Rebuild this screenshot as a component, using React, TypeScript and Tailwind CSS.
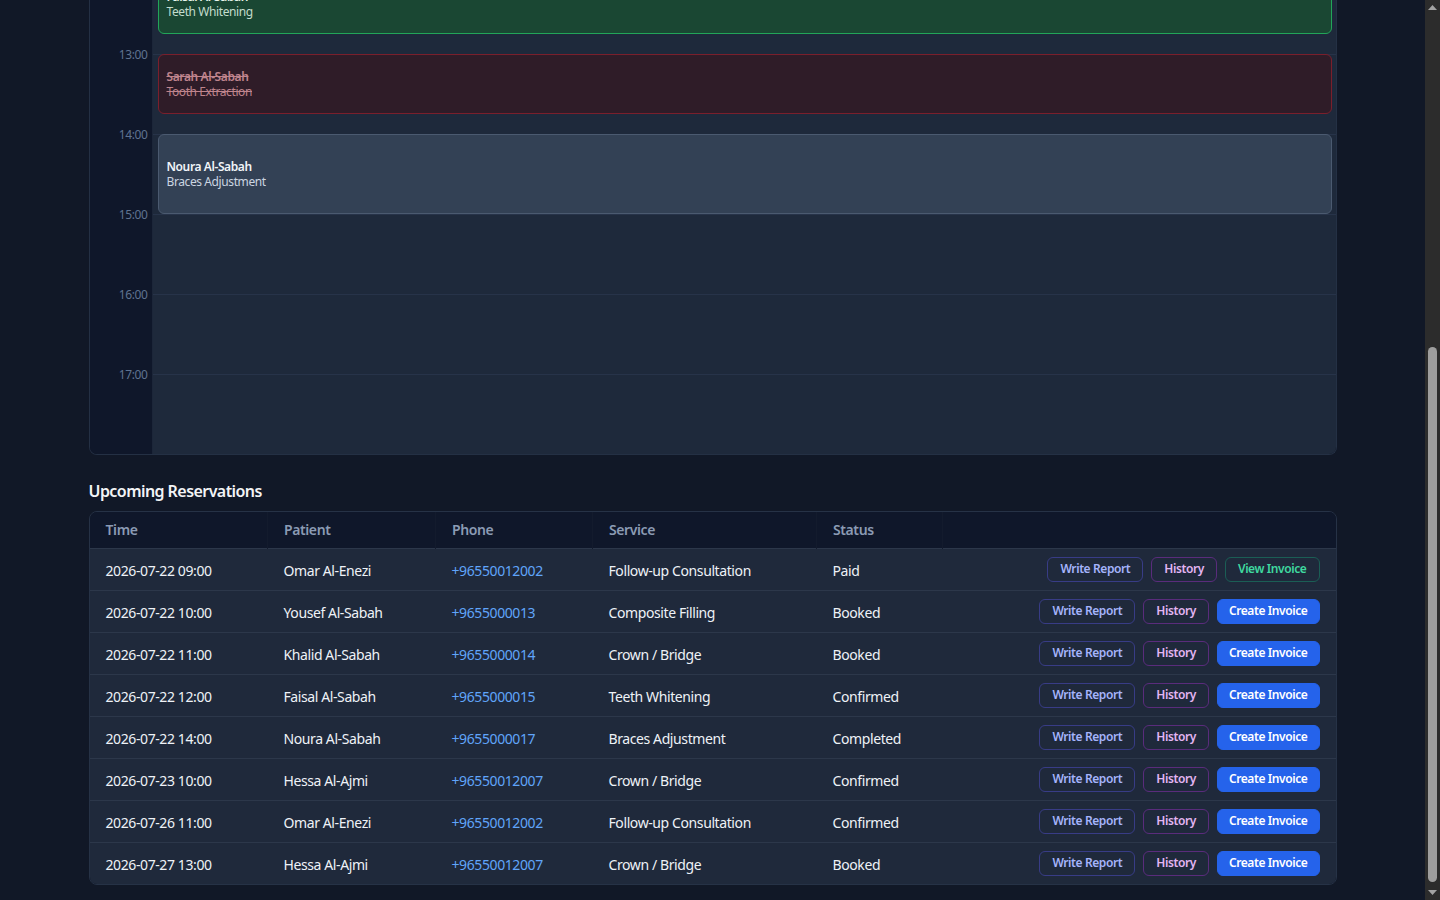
import React from "react";

interface Reservation {
  time: string;
  patient: string;
  phone: string;
  service: string;
  status: string;
  invoiced?: boolean;
}

const reservations: Reservation[] = [
  { time: "2026-07-22 09:00", patient: "Omar Al-Enezi", phone: "+96550012002", service: "Follow-up Consultation", status: "Paid", invoiced: true },
  { time: "2026-07-22 10:00", patient: "Yousef Al-Sabah", phone: "+9655000013", service: "Composite Filling", status: "Booked" },
  { time: "2026-07-22 11:00", patient: "Khalid Al-Sabah", phone: "+9655000014", service: "Crown / Bridge", status: "Booked" },
  { time: "2026-07-22 12:00", patient: "Faisal Al-Sabah", phone: "+9655000015", service: "Teeth Whitening", status: "Confirmed" },
  { time: "2026-07-22 14:00", patient: "Noura Al-Sabah", phone: "+9655000017", service: "Braces Adjustment", status: "Completed" },
  { time: "2026-07-23 10:00", patient: "Hessa Al-Ajmi", phone: "+96550012007", service: "Crown / Bridge", status: "Confirmed" },
  { time: "2026-07-26 11:00", patient: "Omar Al-Enezi", phone: "+96550012002", service: "Follow-up Consultation", status: "Confirmed" },
  { time: "2026-07-27 13:00", patient: "Hessa Al-Ajmi", phone: "+96550012007", service: "Crown / Bridge", status: "Booked" },
];

const hours = ["12:00", "13:00", "14:00", "15:00", "16:00", "17:00"];

// day view, only the afternoon is in view (page is scrolled)
function DayCalendar() {
  return (
    <div className="flex rounded-b-lg border border-t-0 border-[#243044] overflow-hidden">
      <div className="w-[63px] shrink-0 bg-[#0f172a] border-r border-[#1c2639]">
        {hours.map((h) => (
          <div key={h} className="h-20 pr-1 text-right text-xs leading-4 text-[#5f7391]">
            <span className="relative -top-[7px]">{h}</span>
          </div>
        ))}
      </div>
      <div className="relative flex-1 bg-[#1e293b]">
        {hours.map((h) => (
          <div key={h} className="h-20 border-t border-[#273349]" />
        ))}

        <div className="absolute left-[5px] right-1 top-0 h-[60px] rounded-md border border-[#22a559] bg-[#1a4733] px-2 flex flex-col justify-center text-xs leading-[15px]">
          <span className="font-semibold text-[#e8f5ec]">Faisal Al-Sabah</span>
          <span className="text-[#c3dccd]">Teeth Whitening</span>
        </div>

        <div className="absolute left-[5px] right-1 top-20 h-[60px] rounded-md border border-[#7a1f2c] bg-[#2f1c28] px-2 flex flex-col justify-center text-xs leading-[15px] line-through text-[#bf848d]">
          <span className="font-semibold">Sarah Al-Sabah</span>
          <span>Tooth Extraction</span>
        </div>

        <div className="absolute left-[5px] right-1 top-40 h-20 rounded-md border border-[#4b5a70] bg-[#334155] px-2 flex flex-col justify-center text-xs leading-[15px]">
          <span className="font-semibold text-[#f1f5f9]">Noura Al-Sabah</span>
          <span className="text-[#cbd5e1]">Braces Adjustment</span>
        </div>
      </div>
    </div>
  );
}

function RowActions({ invoiced }: { invoiced?: boolean }) {
  return (
    <div className="flex justify-end gap-2">
      <button className="h-[25px] px-3 rounded-md border border-[#383c86] text-xs font-semibold text-[#a5b4fc]">
        Write Report
      </button>
      <button className="h-[25px] px-3 rounded-md border border-[#5a2c7c] text-xs font-semibold text-[#e3b5f3]">
        History
      </button>
      {invoiced ? (
        <button className="h-[25px] px-3 rounded-md border border-[#1b5e55] text-xs font-semibold text-[#3fd9a0]">
          View Invoice
        </button>
      ) : (
        <button className="h-[25px] px-[11px] rounded-md border border-[#2563eb] bg-[#2563eb] text-xs font-semibold text-white">
          Create Invoice
        </button>
      )}
    </div>
  );
}

function ReservationsTable() {
  return (
    <div className="overflow-hidden rounded-lg border border-[#263246]">
      <table className="w-full border-collapse text-sm">
        <thead className="bg-[#0f172a]">
          <tr className="h-9 text-left text-[#8b9bb4]">
            <th className="w-[178px] px-4 font-semibold border-r border-[#131b2d]">Time</th>
            <th className="w-[168px] px-4 font-semibold border-r border-[#131b2d]">Patient</th>
            <th className="w-[157px] px-4 font-semibold border-r border-[#131b2d]">Phone</th>
            <th className="w-[224px] px-4 font-semibold border-r border-[#131b2d]">Service</th>
            <th className="w-[126px] px-4 font-semibold border-r border-[#131b2d]">Status</th>
            <th className="px-4" />
          </tr>
        </thead>
        <tbody className="bg-[#1f293b] text-[#eef2f7]">
          {reservations.map((r, i) => (
            <tr key={i} className="h-[42px] border-t border-[#2c374a]">
              <td className="px-4 pt-[3px]">{r.time}</td>
              <td className="px-4 pt-[3px]">{r.patient}</td>
              <td className="px-4 pt-[3px] text-[#60a5fa]">{r.phone}</td>
              <td className="px-4 pt-[3px]">{r.service}</td>
              <td className="px-4 pt-[3px]">{r.status}</td>
              <td className="px-4">
                <RowActions invoiced={r.invoiced} />
              </td>
            </tr>
          ))}
        </tbody>
      </table>
    </div>
  );
}

function Scrollbar() {
  return (
    <div className="w-[15px] shrink-0 h-full bg-[#2c2c2c] flex flex-col">
      <div className="h-[15px] flex items-center justify-center">
        <svg width="9" height="5" viewBox="0 0 9 5"><path d="M4.5 0L9 5H0z" fill="#a3a3a3" /></svg>
      </div>
      <div className="flex-1 flex flex-col px-[3px] pb-[3px]">
        <div className="h-[332px]" />
        <div className="flex-1 rounded-[5px] bg-[#9e9e9e]" />
      </div>
      <div className="h-[15px] flex items-center justify-center">
        <svg width="9" height="5" viewBox="0 0 9 5"><path d="M0 0H9L4.5 5z" fill="#a3a3a3" /></svg>
      </div>
    </div>
  );
}

export default function App() {
  return (
    <div
      className="flex h-[900px] w-full overflow-hidden bg-[#111827] tracking-[-0.025em]"
      style={{ fontFamily: '"Noto Sans", "Open Sans", sans-serif' }}
    >
      <main className="flex-1 overflow-hidden">
        <div className="mx-auto max-w-7xl px-4 -mt-[26px]">
          <DayCalendar />
          <h2 className="mt-6 mb-2 text-base leading-6 font-semibold tracking-[-0.035em] text-[#f3f4f6]">
            Upcoming Reservations
          </h2>
          <ReservationsTable />
        </div>
      </main>
      <Scrollbar />
    </div>
  );
}
